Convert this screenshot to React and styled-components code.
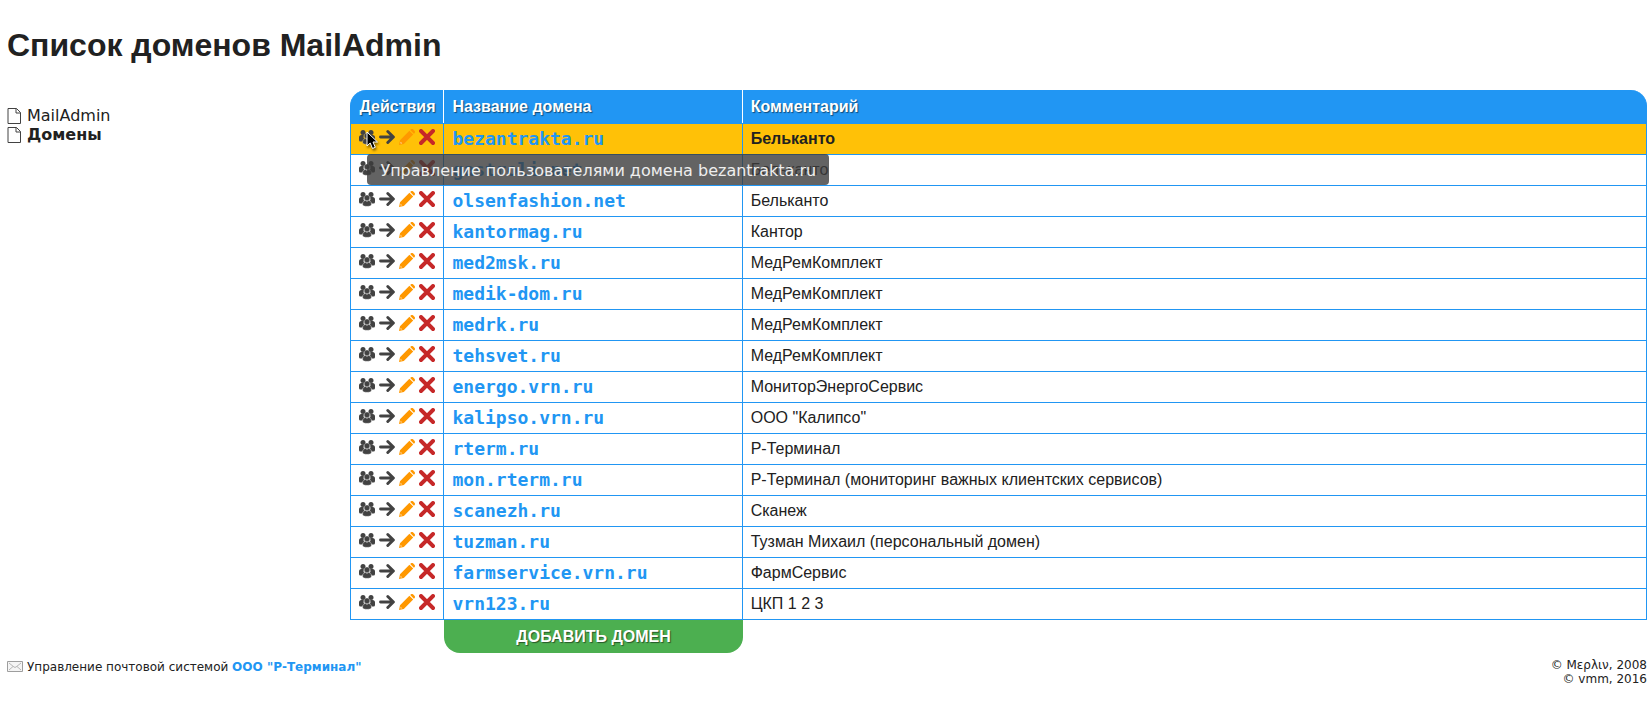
import React from 'react';
import styled, { createGlobalStyle, css } from 'styled-components';

const blue = '#2196f3';
const sans = '"Liberation Sans", Arial, sans-serif';

const Global = createGlobalStyle`
  body {
    margin: 0;
    padding: 0 5px 0 7px;
    background: #fff;
    color: #212121;
    font: 16px/19px "DejaVu Sans", sans-serif;
  }
`;

const Title = styled.h1`
  margin: 0;
  padding: 27px 0 26px;
  font: bold 32px/37px ${sans};
`;

const Layout = styled.div`
  display: flex;
`;

const Nav = styled.nav`
  flex: 0 0 calc(21% - 1px);
  box-sizing: border-box;
  padding-top: 16px;
`;

const NavLink = styled.a`
  display: flex;
  align-items: center;
  gap: 4px;
  color: inherit;
  text-decoration: none;
  font-weight: ${(p) => (p.$current ? 'bold' : 'normal')};
`;

const Main = styled.main`
  flex: 1;
  min-width: 0;
`;

const Table = styled.table`
  width: 100%;
  border-spacing: 0;
  font: 16px/18px ${sans};
`;

const HeadCell = styled.th`
  width: ${(p) => p.$width || 'auto'};
  height: 33px;
  box-sizing: border-box;
  padding: 0 8px;
  background: ${blue};
  color: #fff;
  text-align: left;
  text-shadow: 1px 1px 1px rgba(0, 0, 0, 0.5);
  white-space: nowrap;
  border-right: 1px solid #fff;
  border-left: 0 solid ${blue};

  &:first-child {
    border-left-width: 1px;
    border-top-left-radius: 16px;
  }
  &:last-child {
    border-right-color: ${blue};
    border-top-right-radius: 16px;
  }
`;

const Cell = styled.td`
  height: 31px;
  box-sizing: border-box;
  padding: 0 8px;
  border: solid ${blue};
  border-width: 0 1px 1px 0;
  white-space: nowrap;

  &:first-child {
    border-left-width: 1px;
  }
`;

const Row = styled.tr`
  &:first-child ${Cell} {
    height: 32px;
    border-top-width: 1px;
  }
  ${(p) =>
    p.$active &&
    css`
      background: #ffc107;
      font-weight: bold;
    `}
`;

const Actions = styled.div`
  position: relative;
  display: flex;
  gap: 4px;
  padding-bottom: 4px;
`;

const Action = styled.button`
  display: block;
  padding: 0;
  border: 0;
  background: none;
  cursor: pointer;
`;

const Glyph = styled.svg`
  display: block;
  flex: none;
  width: 16px;
  height: 16px;
`;

const DomainLink = styled.a`
  color: ${blue};
  font: bold 18px/20px "DejaVu Sans Mono", monospace;
  text-decoration: none;
`;

const Tooltip = styled.div`
  position: absolute;
  z-index: 1;
  left: 8px;
  top: 25px;
  padding: 7px 13px 5px;
  border-radius: 4px;
  background: rgba(60, 60, 60, 0.8);
  color: #eee;
  font: 16px/19px "DejaVu Sans", sans-serif;
  white-space: nowrap;
`;

const Pointer = styled.svg`
  position: absolute;
  z-index: 2;
  left: 7px;
  top: 2px;
  width: 14px;
  height: 20px;
  filter: drop-shadow(1px 2px 1px rgba(0, 0, 0, 0.5));
  pointer-events: none;
`;

const FootCell = styled.td`
  padding: 0;
`;

const AddButton = styled.button`
  display: block;
  width: 100%;
  height: 33px;
  padding: 0;
  border: 0;
  border-radius: 0 0 16px 16px;
  background: #4caf50;
  color: #fff;
  font: bold 16px/18px ${sans};
  text-shadow: 1px 1px 1px rgba(0, 0, 0, 0.5);
  text-transform: uppercase;
  cursor: pointer;
`;

const Footer = styled.footer`
  display: flex;
  justify-content: space-between;
  padding-top: 5px;
  font-size: 12px;
  line-height: 14px;
`;

const About = styled.div`
  display: flex;
  align-items: center;
  align-self: flex-start;
  gap: 4px;
`;

const Caption = styled.span`
  padding-top: 2px;
`;

const CompanyLink = styled.a`
  color: ${blue};
  font-weight: bold;
  text-decoration: none;
`;

const Copyright = styled.div`
  text-align: right;
`;

const PageIcon = () => (
  <Glyph viewBox="0 0 16 16" fill="#fff" stroke="#424242" aria-hidden="true">
    <path d="M1 .5h8.500l4 4v11H1z" />
    <path d="M9 .5V5h4.500" fill="none" />
  </Glyph>
);

const MailIcon = () => (
  <Glyph viewBox="0 0 16 16" fill="#f5f5f5" stroke="#9e9e9e" aria-hidden="true">
    <path d="M.5 3.500h15v10H.5z" />
    <path d="M2 5l5 4q1 .8 2 0l5-4M2 12l4-3.500M14 12l-4-3.500" fill="none" stroke="#b5b5b5" />
  </Glyph>
);

const UsersIcon = () => (
  <Glyph viewBox="0 0 16 16" fill="#424242">
    <circle cx="4" cy="3.600" r="2.500" />
    <circle cx="12" cy="3.600" r="2.500" />
    <path d="M0 11V8.500q0-2.500 2.500-2.500h2.300q-.7 3 .7 4-2 .8-2.200 2.500H1.500Q0 12.500 0 11zM16 11V8.500q0-2.500-2.500-2.500h-2.300q.7 3-.7 4 2 .8 2.200 2.500h1.800q1.500 0 1.500-1.500z" />
    <g stroke="#fff" strokeOpacity=".6" strokeWidth=".4">
      <circle cx="8" cy="6.900" r="2.800" />
      <path d="M3.600 13.300q0-3.700 3-3.700L8 10.500l1.400-.9q3 0 3 3.700 0 2-4.400 2t-4.400-2z" />
    </g>
  </Glyph>
);

const ArrowIcon = () => (
  <Glyph viewBox="0 0 16 16" fill="none" stroke="#424242" strokeWidth="2.900" strokeLinecap="round" strokeLinejoin="round">
    <path d="M1.500 8H14M8.800 2.500L14.400 8l-5.600 5.500" />
  </Glyph>
);

const PencilIcon = () => (
  <Glyph viewBox="0 0 16 16" fill="#ff9800">
    <path d="M0 16l1-4.800L10.400 1.800 14.200 5.600l-9.400 9.400zM11.200 1L12 .3q1-.7 2 0L15.700 2q.6 1 0 2l-.8.8z" />
    <path d="M1.700 12.800l1.500 1.500-1.200.4-.7-.7z" fill="#ffd699" />
  </Glyph>
);

const CrossIcon = () => (
  <Glyph viewBox="0 0 16 16" fill="none" stroke="#c62828" strokeWidth="3.900" strokeLinecap="round">
    <path d="M2 2l12 12M14 2L2 14" />
  </Glyph>
);

const actions = [
  ['Пользователи', UsersIcon],
  ['Переадресация', ArrowIcon],
  ['Изменить', PencilIcon],
  ['Удалить', CrossIcon],
];

const domains = [
  ['bezantrakta.ru', 'Бельканто'],
  ['gastroli.net', 'Бельканто'],
  ['olsenfashion.net', 'Бельканто'],
  ['kantormag.ru', 'Кантор'],
  ['med2msk.ru', 'МедРемКомплект'],
  ['medik-dom.ru', 'МедРемКомплект'],
  ['medrk.ru', 'МедРемКомплект'],
  ['tehsvet.ru', 'МедРемКомплект'],
  ['energo.vrn.ru', 'МониторЭнергоСервис'],
  ['kalipso.vrn.ru', 'ООО "Калипсо"'],
  ['rterm.ru', 'Р-Терминал'],
  ['mon.rterm.ru', 'Р-Терминал (мониторинг важных клиентских сервисов)'],
  ['scanezh.ru', 'Сканеж'],
  ['tuzman.ru', 'Тузман Михаил (персональный домен)'],
  ['farmservice.vrn.ru', 'ФармСервис'],
  ['vrn123.ru', 'ЦКП 1 2 3'],
];

function DomainRow({ name, comment, active }) {
  return (
    <Row $active={active}>
      <Cell>
        <Actions>
          {actions.map(([label, Icon]) => (
            <Action key={label} type="button" aria-label={`${label}: ${name}`}>
              <Icon />
            </Action>
          ))}
          {active && <Tooltip role="tooltip">Управление пользователями домена {name}</Tooltip>}
          {active && (
            <Pointer viewBox="0 0 14 20" aria-hidden="true">
              <path d="M1 1v14l3.200-3 2.300 5.500 2.800-1.200L7 11h4.500z" fill="#000" stroke="#fff" />
            </Pointer>
          )}
        </Actions>
      </Cell>
      <Cell>
        <DomainLink href="#">{name}</DomainLink>
      </Cell>
      <Cell>{comment}</Cell>
    </Row>
  );
}

export default function App() {
  return (
    <>
      <Global />
      <Title>Список доменов MailAdmin</Title>
      <Layout>
        <Nav>
          <NavLink href="#"><PageIcon />MailAdmin</NavLink>
          <NavLink href="#" $current aria-current="page"><PageIcon />Домены</NavLink>
        </Nav>
        <Main>
          <Table>
            <thead>
              <tr>
                <HeadCell $width="94px">Действия</HeadCell>
                <HeadCell $width="23%">Название домена</HeadCell>
                <HeadCell>Комментарий</HeadCell>
              </tr>
            </thead>
            <tbody>
              {domains.map(([name, comment], i) => (
                <DomainRow key={name} name={name} comment={comment} active={i === 0} />
              ))}
            </tbody>
            <tfoot>
              <tr>
                <FootCell />
                <FootCell><AddButton type="button">Добавить домен</AddButton></FootCell>
                <FootCell />
              </tr>
            </tfoot>
          </Table>
        </Main>
      </Layout>
      <Footer>
        <About>
          <MailIcon />
          <Caption>Управление почтовой системой <CompanyLink href="#">ООО "Р-Терминал"</CompanyLink></Caption>
        </About>
        <Copyright>
          © Μερλιν, 2008<br />© vmm, 2016
        </Copyright>
      </Footer>
    </>
  );
}
